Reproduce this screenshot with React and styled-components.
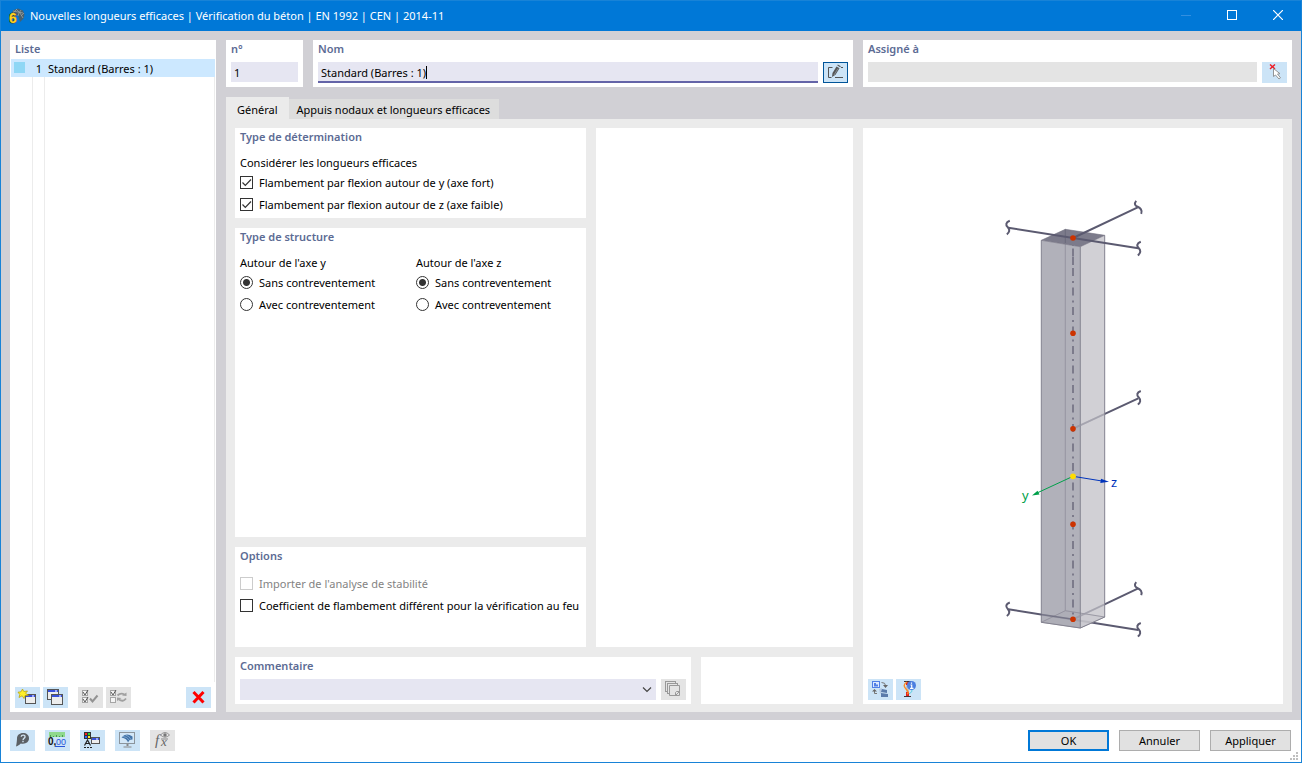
import React, { useState } from "react";
import styled, { createGlobalStyle, css } from "styled-components";

const GlobalStyle = createGlobalStyle`
  * { box-sizing: border-box; }
  body { margin: 0; background: #fff; }
  body, button, input, select {
    font-family: "Noto Sans", "Open Sans", sans-serif;
    font-size: 11px;
    color: #000;
  }
`;

const Window = styled.div`
  min-height: 100vh;
  display: flex;
  flex-direction: column;
  border: 1px solid #1883d7;
  background: #fff;
`;

const TitleBar = styled.header`
  height: 30px;
  flex: none;
  display: flex;
  align-items: center;
  gap: 4px;
  padding-left: 8px;
  background: #0078d7;
  color: #fff;
`;

const Title = styled.h1`
  flex: 1;
  margin: 0;
  padding-bottom: 1px;
  font-size: 11px;
  font-weight: 400;
  white-space: nowrap;
`;

const CaptionGroup = styled.div`display: flex;`;
const CaptionButton = styled.button`
  width: 46px;
  height: 30px;
  padding: 0 0 2px;
  border: 0;
  background: none;
  display: grid;
  place-items: center;
  color: #fff;
  &:disabled { color: #338fe0; }
`;

const Body = styled.div`
  flex: 1;
  display: flex;
  gap: 10px;
  padding: 9px 9px 8px;
  background: #d1d0d5;
`;

const Panel = styled.section`
  display: flex;
  flex-direction: column;
  min-width: 0;
  padding: 0 5px 4px;
  background: #fff;
  flex: ${(p) => p.$flex || "none"};
`;

const headingStyle = css`
  display: block;
  margin: 0;
  height: 18px;
  line-height: 18px;
  font-size: 11px;
  font-weight: 600;
  color: #5c6b94;
`;
const Heading = styled.h2`${headingStyle}`;
const FieldLabel = styled.label`${headingStyle}`;

const ListPanel = styled(Panel)`
  width: 206px;
  padding: 0 1px 4px;
  ${Heading} { padding-left: 4px; }
`;

const List = styled.ul`
  flex: 1;
  margin: 1px 0 5px;
  padding: 0;
  list-style: none;
  background:
    linear-gradient(#ececec, #ececec) 21px 0 / 1px 100% no-repeat,
    linear-gradient(#ececec, #ececec) 33px 0 / 1px 100% no-repeat,
    linear-gradient(#ececec, #ececec) 100% 0 / 1px 100% no-repeat;
`;

const ListRow = styled.li`
  display: grid;
  grid-template-columns: 22px 12px 1fr;
  align-items: center;
  height: 18px;
  background: #cce8ff;
  white-space: nowrap;
`;
const Swatch = styled.span`
  width: 11px;
  height: 11px;
  margin: 0 0 2px 3px;
  background: #8fd7f5;
`;
const RowNumber = styled.span`text-align: center;`;
const RowName = styled.span`padding-left: 3px;`;

const ToolRow = styled.div`
  display: flex;
  gap: 3px;
  padding: 0 ${(p) => p.$indent}px;
`;
const ToolGap = styled.span`
  width: ${(p) => p.$width || "auto"};
  flex: ${(p) => (p.$width ? "none" : 1)};
`;

const ToolButton = styled.button`
  width: 25px;
  height: 21px;
  flex: none;
  padding: 0;
  display: grid;
  place-items: center;
  border: ${(p) => (p.$focused ? "1px solid #005499" : "0")};
  background: #cce4f7;
  &:disabled { background: #e4e4e4; }
  svg { display: block; }
`;

const Main = styled.main`
  flex: 1;
  min-width: 0;
  display: flex;
  flex-direction: column;
`;

const HeaderRow = styled.div`
  display: grid;
  grid-template-columns: 77px minmax(0, 540fr) minmax(0, 429fr);
  gap: 10px;
  margin-bottom: 10px;
`;

const FieldRow = styled.div`
  display: flex;
  gap: 5px;
  margin-top: 4px;
`;

const TextField = styled.input`
  flex: 1;
  min-width: 0;
  height: 20px;
  margin-bottom: 1px;
  padding: 1px 3px 0;
  border: 0;
  outline: 0;
  background: #e6e6f2;
  &:disabled { background: #e4e4e4; }
`;

const ActiveField = styled.div`
  flex: 1;
  min-width: 0;
  height: 21px;
  display: flex;
  align-items: center;
  padding: 2px 0 0 3px;
  background: #e6e6f2;
  border-bottom: 2px solid #6464a8;
  input {
    field-sizing: content;
    padding: 0;
    border: 0;
    outline: 0;
    background: none;
    caret-color: transparent;
  }
`;
const Caret = styled.span`
  width: 1px;
  height: 13px;
  background: #000;
`;

const Tabs = styled.div`
  display: flex;
  align-items: flex-end;
`;
const Tab = styled.button`
  height: ${(p) => (p.$active ? 22 : 20)}px;
  padding: ${(p) => (p.$active ? "3px 11px 0" : "1px 9px 0 8px")};
  border: 0;
  background: ${(p) => (p.$active ? "#ebebeb" : "#dddddd")};
  white-space: nowrap;
`;

const TabPage = styled.div`
  flex: 1;
  display: grid;
  grid-template-columns: minmax(0, 618fr) minmax(0, 420fr);
  gap: 10px;
  padding: 9px 9px 8px;
  background: #ebebeb;
`;
const FormArea = styled.div`
  display: flex;
  flex-direction: column;
  gap: 10px;
`;
const UpperForm = styled.div`
  flex: 1;
  display: grid;
  grid-template-columns: minmax(0, 351fr) minmax(0, 257fr);
  gap: 10px;
`;
const LowerForm = styled.div`
  display: grid;
  grid-template-columns: minmax(0, 3fr) minmax(0, 1fr);
  gap: 10px;
`;
const Stack = styled.div`
  display: flex;
  flex-direction: column;
  gap: 10px;
`;

const Group = styled.fieldset`
  margin: 7px 0 0;
  padding: 0;
  border: 0;
  min-width: 0;
`;
const GroupLabel = styled.legend`
  padding: 1px 0 0;
  height: 18px;
  line-height: 18px;
`;
const GroupColumns = styled.div`
  display: grid;
  grid-template-columns: 176px 1fr;
`;
const OptionsPanel = styled(Panel)`min-height: 100px;`;
const DeterminationPanel = styled(Panel)`padding-bottom: 3px;`;

const Choice = styled.label`
  display: flex;
  align-items: center;
  gap: 6px;
  height: 22px;
  white-space: nowrap;
  color: ${(p) => (p.$disabled ? "#838383" : "#000")};
`;
const Mark = styled.span`
  flex: none;
  width: 13px;
  height: 13px;
  display: grid;
  > * { grid-area: 1 / 1; }
  svg { pointer-events: none; }
  input {
    appearance: none;
    width: 13px;
    height: 13px;
    margin: 0;
    border: 1px solid #333;
    background: #fff;
  }
  input:disabled { border-color: #ccc; }
  input[type="radio"] { border-radius: 50%; }
  input[type="radio"]:checked {
    background: radial-gradient(circle, #333 3px, #fff 4px);
  }
`;

const SelectBox = styled.div`
  flex: 1;
  min-width: 0;
  display: grid;
  > * { grid-area: 1 / 1; }
  svg {
    justify-self: end;
    align-self: center;
    margin-right: 4px;
    pointer-events: none;
  }
`;
const Select = styled.select`
  appearance: none;
  width: 100%;
  height: 21px;
  padding: 0 18px 0 3px;
  border: 0;
  border-radius: 0;
  background: #e6e6f2;
`;

const PreviewPanel = styled(Panel)`
  padding: 0 0 4px;
`;
const Drawing = styled.svg`
  flex: 1;
  width: 100%;
  min-height: 0;
  display: block;
`;

const FooterFrame = styled.div`position: relative;`;
const Footer = styled.footer`
  display: flex;
  align-items: center;
  gap: 10px;
  height: 42px;
  padding: 0 10px 1px 9px;
`;
const Spacer = styled.span`flex: 1;`;
const PushButton = styled.button`
  width: 81px;
  height: 21px;
  padding: 0;
  border: ${(p) => (p.$primary ? "2px solid #0078d7" : "1px solid #adadad")};
  background: #e1e1e1;
`;
const Grip = styled.svg`
  position: absolute;
  right: 3px;
  bottom: 2px;
`;

function Icon({ children }) {
  return (
    <svg width="21" height="17" viewBox="0 0 21 17" aria-hidden="true">
      {children}
    </svg>
  );
}

const LogoIcon = () => (
  <svg width="17" height="17" viewBox="0 0 17 17" aria-hidden="true">
    <path d="M2 6 4.500 2 9 .5l5 2 1.500 4-1 4L11 14 9 7z" fill="#47606f" />
    <path d="M4 3l5 1 5 1M7 1l4 4 3 5M12 2l-2 3-1 3M15 5l-3 3M4 5l4-4" fill="none" stroke="#9aa0a0" strokeWidth=".8" />
    <text
      x="0"
      y="15"
      fontSize="14"
      fontWeight="700"
      fontFamily="Liberation Sans, sans-serif"
      fill="#ffd21f"
      stroke="#4d4a2c"
      strokeWidth="1.200"
      paintOrder="stroke"
    >
      6
    </text>
  </svg>
);

function MiniWindow({ x, y, w = 11, h = 11 }) {
  return (
    <g>
      <rect x={x + 0.5} y={y + 0.5} width={w} height={h} fill="#ededed" stroke="#555" />
      <rect x={x + 1} y={y + 1} width={w - 1} height="2" fill="#3950d8" />
      <rect x={x + w - 3} y={y + 1} width="2" height="2" fill="#9dabff" />
    </g>
  );
}

const NewIcon = () => (
  <Icon>
    <MiniWindow x={8} y={5} w={10} h={9} />
    <path d="m5.500 0 1.300 2.500 3.700-.500-2 2.300 3 2-3.500.2L7 9.500 5.200 6.800 2 8.500l.8-3L1 3.200l3-.4z" fill="#fff02a" stroke="#b39c00" strokeWidth=".7" />
  </Icon>
);
const CopyIcon = () => (
  <Icon>
    <MiniWindow x={2} y={0} w={11} h={10} />
    <MiniWindow x={6} y={5} w={11} h={10} />
  </Icon>
);
const TickBox = ({ x, y, on }) => (
  <g fill="none">
    <rect x={x + 0.5} y={y + 0.5} width="5" height="5" fill="#f4f4f4" stroke="#a5a5a5" />
    {on && <path d={`M${x + 1} ${y + 2}l2 3 3-5`} stroke="#555" />}
  </g>
);
const CheckAllIcon = () => (
  <Icon>
    <TickBox x={2} y={1} on />
    <TickBox x={2} y={8} on />
    <path d="m10 9.500 2.500 3 5-6" fill="none" stroke="#929292" strokeWidth="2" />
  </Icon>
);
const ToggleIcon = () => (
  <Icon>
    <TickBox x={2} y={1} on />
    <TickBox x={2} y={8} />
    <path d="M9.500 6.500q3-3 7-1M18 9.500q-3 4-7 1" fill="none" stroke="#a0a0a0" strokeWidth="1.800" />
    <path d="m14 6.500 4.500-3v3.500zM13.500 9l-4.500-.5v3.500z" fill="#a0a0a0" />
  </Icon>
);
const DeleteIcon = () => (
  <Icon>
    <path d="m5.500 3 10 10.500M15.500 3 5.500 13.500" stroke="#f00" strokeWidth="3" />
  </Icon>
);
const EditIcon = () => (
  <Icon>
    <path d="M7.500 3.500h-4v10h3M10 13.500h8M16 3.500h2" fill="none" stroke="#555" />
    <path d="m7 13 .5-4 4-6.500 3 1.800-4 6.500z" fill="#555" />
    <path d="m12.300 1.500.5-1 3 1.800-.6 1z" fill="#555" />
    <path d="m9 11 4-6.500" stroke="#8e9aa3" strokeWidth=".8" />
  </Icon>
);
const DeselectIcon = () => (
  <Icon>
    <path d="m6 .5 5 4.500M11 .5 6 5" stroke="#ee1c25" strokeWidth="1.400" />
    <path d="M9.500 4.500v8l2-1.500 3.500 4 1.500-1.200L13.500 10l2.500-.3z" fill="#fff" stroke="#8a8a8a" strokeWidth=".9" />
  </Icon>
);
const PagesIcon = () => (
  <Icon>
    <g fill="#e4e4e4" stroke="#999">
      <rect x="2.500" y=".5" width="10" height="10" />
      <rect x="4.500" y="2.500" width="10" height="10" />
      <path d="M6.500 4.500h10v10h-10zM12.500 14v-2.500l1-1h3l-4 4" />
    </g>
  </Icon>
);
const HelpIcon = () => (
  <Icon>
    <path d="M11 1c-3.500 0-6 2.300-6 5.300 0 1.700-.3 4.700-1 8.200 1.800-.5 3.500-1.700 4.800-3 5 1 8.200-1.500 8.200-5.200C17 3 14.500 1 11 1z" fill="#5b6065" />
    <path d="M9.200 4.800c.2-2.300 4-2.200 3.800.1-.1 1.300-1.900 1.500-1.900 3.100M11 8.800v1.400" fill="none" stroke="#cfe0ee" strokeWidth="1.400" />
  </Icon>
);
const UnitsIcon = () => (
  <Icon>
    <rect x="2" y="0" width="16" height="5" fill="#8fd98c" />
    <path d="M3.500 5V3M6.500 5V4M9.500 5V3M12.500 5V4M15.500 5V3" stroke="#4a9a4f" />
    <text x="1" y="13" fontSize="10" fontFamily="Liberation Sans, sans-serif" fontWeight="700" fill="#111">0,</text>
    <text x="9" y="13" fontSize="9" fontFamily="Liberation Sans, sans-serif" fill="#2855d8">00</text>
    <path d="M8 14.500h10" stroke="#2855d8" />
  </Icon>
);
const DisplayIcon = () => (
  <Icon>
    <rect x="2" y="0" width="7" height="7" fill="#333" />
    <path d="M3 1h2v2H3z" fill="#f22" />
    <path d="M6 1h2v2H6z" fill="#2cd52c" />
    <path d="M3 4h2v2H3z" fill="#3262ff" />
    <path d="M6 4h2v2H6z" fill="#ffe424" />
    <path d="M2.500 13.500 5.500 8l3 5.500M4 11.500h3" fill="none" stroke="#222" strokeWidth="1.200" />
    <path d="M2 15.500h2M5 15.500h2M8 15.500h2" stroke="#222" />
    <MiniWindow x={9} y={5} w={8} h={6} />
  </Icon>
);
const MonitorIcon = () => (
  <Icon>
    <rect x="2.500" y=".5" width="15" height="11" fill="#d3e7f7" stroke="#8b949c" />
    <path d="M4.500 5.500Q9 0 15.500 4.500v3l-3 .5-1.500 2.500q-1-4-6.500-5z" fill="#4273a8" />
    <path d="M6 4.500q4 0 6.500 4M8.500 3q4 1 5.500 4.500" fill="none" stroke="#91b5d8" strokeWidth=".7" />
    <path d="M10.500 12v2" stroke="#888" strokeWidth="2" />
    <path d="M6.500 15h8" stroke="#888" />
  </Icon>
);
const FormulaIcon = () => (
  <Icon>
    <text x="3" y="13" fontSize="15" fontStyle="italic" fontFamily="Liberation Serif, serif" fill="#666">f</text>
    <text x="9" y="14" fontSize="13" fontStyle="italic" fontFamily="Liberation Serif, serif" fill="#666">x</text>
    <path d="M9 7h7" stroke="#888" />
    <path d="M8.500 3q4.500-5 9 0-4.500 4.500-9 0z" fill="#e4e4e4" stroke="#888" strokeWidth=".9" />
    <circle cx="13" cy="3" r="1.700" fill="#777" />
  </Icon>
);
const SwapViewIcon = () => (
  <Icon>
    <rect x="2.500" y=".5" width="7" height="6" fill="#dce9ff" stroke="#4f7fe6" />
    <path d="M4 5.500V2h2v1.500h2v2z" fill="#4f7fe6" />
    <path d="M11.500 1.500q4 0 4 3M4.500 10v2.500H7" fill="none" stroke="#777" />
    <path d="M13 4h5l-2.500 3zM2 10.500h5L4.500 8z" fill="#666" />
    <path d="m9 8 3-1v4l-2 2z" fill="#b6c9e2" />
    <path d="m12 8 5 1v3l-6-1zM11 12l7 1v3h-7z" fill="#5a7bab" />
  </Icon>
);
const InfoIcon = () => (
  <Icon>
    <path d="M6 .5h7M6 15.500h7" stroke="#433" />
    <path d="M9.500 1v3M9.500 11v4" stroke="#e02020" strokeWidth="3" />
    <path d="M9.500 4v7" stroke="#bbc3cc" strokeWidth="3" />
    <path d="M9 1Q4 4 8 8t1 5" fill="none" stroke="#ff8b22" strokeWidth="1.400" />
    <path d="M14 8q1 3-3 5" fill="none" stroke="#58cce0" />
    <circle cx="13.500" cy="4.500" r="4.500" fill="#4b7ee0" />
    <path d="M13.500 1.500v1.200M12.500 4h1.200v3M12 7.300h3.500" fill="none" stroke="#fff" strokeWidth="1.200" />
  </Icon>
);

const BAR = "#5b5a70";
const nodes = [48, 143.3, 238.7, 334.3, 429.3];

function BreakMark({ x, y, rising }) {
  return (
    <path
      d={
        rising
          ? `M${x - 1.5} ${y - 6.5}c-2.500 3-1 5 1.500 6s5 3.500 3.500 7`
          : `M${x + 2.5} ${y - 6.5}c-4 1.500-4.500 4-2 6.500s1.500 5.500-1 7`
      }
      fill="none"
      stroke={BAR}
      strokeWidth="2"
    />
  );
}

function ColumnDrawing() {
  return (
    <Drawing viewBox="-127 -62 420 551" role="img" aria-label="Poteau avec axes y et z">
      <g stroke={BAR} strokeWidth="2">
        <path d="M18.300 419.300 148.300 440M83 429.300 147.700 398.700M83 238.700 148.300 208.300" />
      </g>
      <path d="M51.300 432.300 75.300 420.700 114.700 427 90.300 438z" fill="#8b8a99" fillOpacity=".3" stroke="#8b8a99" strokeWidth=".6" />
      <path d="M51.300 50.300 90.300 56.700V438L51.300 432.300z" fill="#a9a8b3" fillOpacity=".9" />
      <path d="M90.300 56.700 114.700 45.300V427L90.300 438z" fill="#c9c8ce" fillOpacity=".86" />
      <path d="M51.300 432.300 75.300 420.700 114.700 427M75.300 40V420.700" fill="none" stroke="#8f8e9b" strokeWidth=".8" />
      <path d="M51.300 50.300V432.300L90.300 438 114.700 427V45.300M90.300 56.700V438" fill="none" stroke="#83828f" />
      <path d="M51.300 50.300 75.300 39.300 114.700 45.300 90.300 56.700z" fill="#7c7b8b" stroke="#737282" strokeWidth=".6" />
      <path d="M75.300 39.300V53" stroke="#666576" strokeWidth=".8" />
      <path d="M83 58V429" stroke="#7c7b8b" strokeWidth="2" strokeDasharray="8 5 2 4.500" strokeDashoffset="-20" />
      <path d="M83 51v5M83 60v2M83 67v8" stroke="#7c7b8b" strokeWidth="2" />
      <path d="M18.300 37.700 148.300 58.300M83 48 147.700 17.300" stroke={BAR} strokeWidth="2" />
      <path d="M51 424.500 83 429.300" stroke={BAR} strokeWidth="1.600" opacity=".6" />
      <path d="M83 238.700 114 224.300M83 429.300 114 414.600" stroke="#9d9ca8" strokeWidth="1.600" opacity=".7" />
      <BreakMark x={17.3} y={37.3} />
      <BreakMark x={148.3} y={58.3} />
      <BreakMark x={147.7} y={17.3} rising />
      <BreakMark x={148.3} y={207.5} />
      <BreakMark x={17.3} y={419} />
      <BreakMark x={148.3} y={439.5} />
      <BreakMark x={147.7} y={398.7} rising />
      {nodes.map((y) => (
        <circle key={y} cx="83" cy={y} r="2.800" fill="#cc3300" />
      ))}
      <path d="M83 286.300 47 303" stroke="#00a04a" />
      <path d="m42 305.500 5.500-4.800 2 3.700z" fill="#00a04a" />
      <path d="M83 286.300 112 291" stroke="#0033bb" />
      <path d="m119 291.700-8-3-.7 4.300z" fill="#0033bb" />
      <circle cx="83" cy="286.300" r="2.900" fill="#ffdc00" />
      <text x="32" y="310" fontSize="13" fill="#00a04a">y</text>
      <text x="121" y="297" fontSize="13" fill="#0033bb">z</text>
    </Drawing>
  );
}

function CheckChoice({ label, initial = false, disabled = false }) {
  const [on, setOn] = useState(initial);
  return (
    <Choice $disabled={disabled}>
      <Mark>
        <input type="checkbox" checked={on} disabled={disabled} onChange={() => setOn(!on)} />
        {on && (
          <svg width="13" height="13" viewBox="0 0 13 13" aria-hidden="true">
            <path d="m2.500 6.500 2.800 2.800 5.700-5.800" fill="none" stroke="#333" strokeWidth="1.200" />
          </svg>
        )}
      </Mark>
      {label}
    </Choice>
  );
}

function BracingGroup({ name, label }) {
  const [value, setValue] = useState("Sans contreventement");
  return (
    <Group>
      <GroupLabel>{label}</GroupLabel>
      {["Sans contreventement", "Avec contreventement"].map((text) => (
        <Choice key={text}>
          <Mark>
            <input type="radio" name={name} checked={value === text} onChange={() => setValue(text)} />
          </Mark>
          {text}
        </Choice>
      ))}
    </Group>
  );
}

function CaptionButtons() {
  return (
    <CaptionGroup>
      <CaptionButton aria-label="Réduire" disabled>
        <svg width="10" height="10" viewBox="0 0 10 10"><path d="M0 5.500h10" stroke="currentColor" /></svg>
      </CaptionButton>
      <CaptionButton aria-label="Agrandir">
        <svg width="10" height="10" viewBox="0 0 10 10"><rect x=".5" y=".5" width="9" height="9" fill="none" stroke="currentColor" /></svg>
      </CaptionButton>
      <CaptionButton aria-label="Fermer">
        <svg width="10" height="10" viewBox="0 0 10 10"><path d="m0 0 10 10M10 0 0 10" stroke="currentColor" strokeWidth="1.200" /></svg>
      </CaptionButton>
    </CaptionGroup>
  );
}

export default function App() {
  const [name, setName] = useState("Standard (Barres : 1)");
  return (
    <Window>
      <GlobalStyle />
      <TitleBar>
        <LogoIcon />
        <Title>Nouvelles longueurs efficaces | Vérification du béton | EN 1992 | CEN | 2014-11</Title>
        <CaptionButtons />
      </TitleBar>
      <Body>
        <ListPanel>
          <Heading>Liste</Heading>
          <List>
            <ListRow>
              <Swatch />
              <RowNumber>1</RowNumber>
              <RowName>Standard (Barres : 1)</RowName>
            </ListRow>
          </List>
          <ToolRow $indent={4}>
            <ToolButton aria-label="Nouveau"><NewIcon /></ToolButton>
            <ToolButton aria-label="Copier"><CopyIcon /></ToolButton>
            <ToolGap $width="4px" />
            <ToolButton aria-label="Tout cocher" disabled><CheckAllIcon /></ToolButton>
            <ToolButton aria-label="Inverser" disabled><ToggleIcon /></ToolButton>
            <ToolGap />
            <ToolButton aria-label="Supprimer"><DeleteIcon /></ToolButton>
          </ToolRow>
        </ListPanel>
        <Main>
          <HeaderRow>
            <Panel>
              <FieldLabel htmlFor="number">n°</FieldLabel>
              <FieldRow><TextField id="number" defaultValue="1" /></FieldRow>
            </Panel>
            <Panel>
              <FieldLabel htmlFor="name">Nom</FieldLabel>
              <FieldRow>
                <ActiveField>
                  <input id="name" value={name} onChange={(e) => setName(e.target.value)} />
                  <Caret />
                </ActiveField>
                <ToolButton aria-label="Modifier le nom" $focused><EditIcon /></ToolButton>
              </FieldRow>
            </Panel>
            <Panel>
              <FieldLabel htmlFor="assigned">Assigné à</FieldLabel>
              <FieldRow>
                <TextField id="assigned" disabled />
                <ToolButton aria-label="Sélectionner"><DeselectIcon /></ToolButton>
              </FieldRow>
            </Panel>
          </HeaderRow>
          <Tabs role="tablist">
            <Tab role="tab" aria-selected="true" $active>Général</Tab>
            <Tab role="tab" aria-selected="false">Appuis nodaux et longueurs efficaces</Tab>
          </Tabs>
          <TabPage>
            <FormArea>
              <UpperForm>
                <Stack>
                  <DeterminationPanel>
                    <Heading>Type de détermination</Heading>
                    <Group>
                      <GroupLabel>Considérer les longueurs efficaces</GroupLabel>
                      <CheckChoice label="Flambement par flexion autour de y (axe fort)" initial />
                      <CheckChoice label="Flambement par flexion autour de z (axe faible)" initial />
                    </Group>
                  </DeterminationPanel>
                  <Panel $flex="1">
                    <Heading>Type de structure</Heading>
                    <GroupColumns>
                      <BracingGroup name="bracing-y" label="Autour de l'axe y" />
                      <BracingGroup name="bracing-z" label="Autour de l'axe z" />
                    </GroupColumns>
                  </Panel>
                  <OptionsPanel>
                    <Heading>Options</Heading>
                    <Group>
                      <CheckChoice label="Importer de l'analyse de stabilité" disabled />
                      <CheckChoice label="Coefficient de flambement différent pour la vérification au feu" />
                    </Group>
                  </OptionsPanel>
                </Stack>
                <Panel />
              </UpperForm>
              <LowerForm>
                <Panel>
                  <FieldLabel htmlFor="comment">Commentaire</FieldLabel>
                  <FieldRow>
                    <SelectBox>
                      <Select id="comment"><option value="" /></Select>
                      <svg width="10" height="6" viewBox="0 0 10 6" aria-hidden="true">
                        <path d="m1 .5 4 4 4-4" fill="none" stroke="#444" strokeWidth="1.200" />
                      </svg>
                    </SelectBox>
                    <ToolButton aria-label="Commentaires" disabled><PagesIcon /></ToolButton>
                  </FieldRow>
                </Panel>
                <Panel />
              </LowerForm>
            </FormArea>
            <PreviewPanel>
              <ColumnDrawing />
              <ToolRow $indent={5}>
                <ToolButton aria-label="Changer de vue"><SwapViewIcon /></ToolButton>
                <ToolButton aria-label="Informations"><InfoIcon /></ToolButton>
              </ToolRow>
            </PreviewPanel>
          </TabPage>
        </Main>
      </Body>
      <FooterFrame>
        <Footer>
          <ToolButton aria-label="Aide"><HelpIcon /></ToolButton>
          <ToolButton aria-label="Unités"><UnitsIcon /></ToolButton>
          <ToolButton aria-label="Affichage"><DisplayIcon /></ToolButton>
          <ToolButton aria-label="Vue"><MonitorIcon /></ToolButton>
          <ToolButton aria-label="Formules" disabled><FormulaIcon /></ToolButton>
          <Spacer />
          <PushButton $primary>OK</PushButton>
          <PushButton>Annuler</PushButton>
          <PushButton>Appliquer</PushButton>
        </Footer>
        <Grip width="8" height="8" viewBox="0 0 8 8" aria-hidden="true">
          <path d="M6 0h2v2H6zM3 3h2v2H3zM6 3h2v2H6zM0 6h2v2H0zM3 6h2v2H3zM6 6h2v2H6z" fill="#bfbfbf" />
        </Grip>
      </FooterFrame>
    </Window>
  );
}
